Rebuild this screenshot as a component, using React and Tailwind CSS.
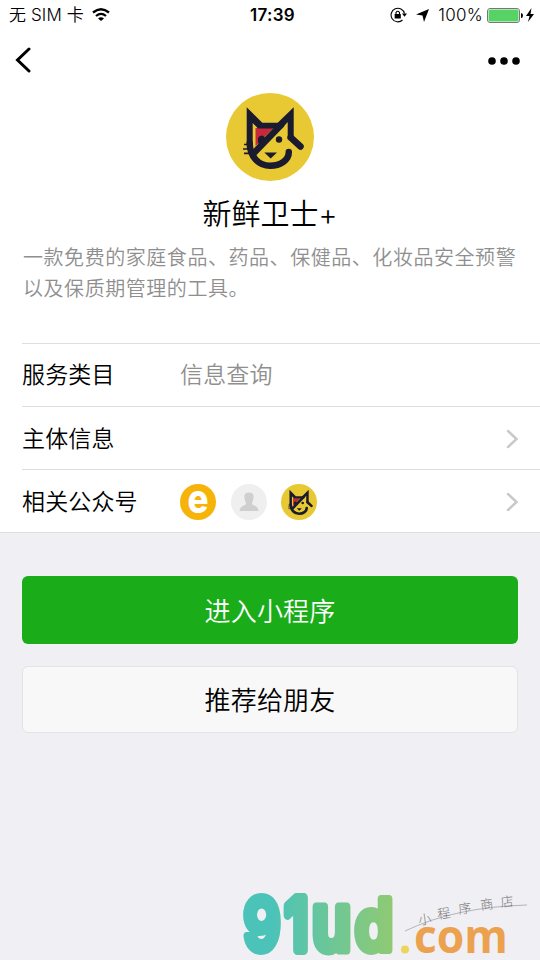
import React from "react";

const CatLogo = ({ className }) => (
  <svg viewBox="0 0 88 88" className={className}>
    <circle cx="44" cy="44" r="44" fill="#e9c933" />
    <path d="M29.500 35H47.500L29.500 53Z" fill="#c9283a" />
    <path d="M32 49V45Q33 42.500 36 42.500Q39 43 39 46L33 52Z" fill="#1a1b2e" />
    <path
      d="M20.700 14.200L36.300 29.800H51.700L67.700 14.200V44.500L61.700 46.500V29L56 35.500H32L26.700 30V52H20.700Z"
      fill="#1a1b2e"
    />
    <path d="M64.700 44.500L74.500 53.500" stroke="#1a1b2e" strokeWidth="6.500" strokeLinecap="round" />
    <path
      d="M23.700 50C23.700 64 33 72.800 44 72.800C54.500 72.800 63 67 62.800 59"
      fill="none"
      stroke="#1a1b2e"
      strokeWidth="6.500"
      strokeLinecap="round"
    />
    <path d="M56 31L26 62" stroke="#1a1b2e" strokeWidth="6.500" />
    <circle cx="53" cy="46.500" r="3.200" fill="#1a1b2e" />
    <path d="M38.300 59.500H51L44.700 65.500Z" fill="#1a1b2e" />
    <path d="M18 51.500H22M17 56H23M18 60.300H24" stroke="#1a1b2e" strokeWidth="1.700" />
  </svg>
);

const Chevron = () => (
  <svg viewBox="0 0 14 20" className="mt-0.5 ml-auto h-5 w-3.5">
    <path d="M3 2L11.500 10L3 18" fill="none" stroke="#c9c9cc" strokeWidth="2.500" strokeLinecap="round" />
  </svg>
);

const StatusBar = () => (
  <div className="grid h-[30px] grid-cols-3 items-center pr-[6px] pl-[9px]">
    <div className="flex items-center text-[17px]">
      <span className="mt-px tracking-[0.1px]">无 SIM 卡</span>
      <svg viewBox="0 0 18 13" className="mb-0.5 ml-2 h-[13px] w-[18px]">
        <path d="M1 4.500Q9 -2 17 4.500M4 8Q9 3.700 14 8" fill="none" stroke="#000" strokeWidth="2.300" />
        <path d="M6 10.500Q9 8 12 10.500L9 13Z" />
      </svg>
    </div>
    <div className="mt-px pl-0.5 text-center text-[17px] font-semibold tracking-[0.3px]">17:39</div>
    <div className="flex items-center justify-end text-[17px]">
      <svg viewBox="0 0 17 16" className="h-4 w-[17px]" fill="none" stroke="#000" strokeWidth="1.100">
        <path d="M14.500 6.500A6.800 6.800 0 1 0 12.500 13" />
        <path d="M12 6.500H17L14.500 9.800Z" fill="#000" stroke="none" />
        <path d="M5.200 7.500H10.200V11H5.200Z" fill="#000" />
        <path d="M6 7V5.500Q7.700 3 9.500 5.500V7" />
      </svg>
      <svg viewBox="0 0 13 13" className="ml-[9px] h-[13px] w-[13px]">
        <path d="M13 0L8 13L6.500 6.500L0 5.500Z" />
      </svg>
      <span className="mt-px ml-[9px] tracking-[0.3px]">100%</span>
      <svg viewBox="0 0 36 15" className="ml-1 h-[15px] w-9">
        <rect x="0.500" y="0.500" width="32" height="14" rx="2.500" fill="#fff" stroke="#777" />
        <rect x="1.500" y="1.500" width="30" height="12" rx="1.500" fill="#56d364" />
        <path d="M34 5Q36 5 36 7.500T34 10Z" />
      </svg>
      <svg viewBox="0 0 8 14" className="ml-[3px] h-3.5 w-2">
        <path d="M5.500 0L0 8H3.500L2 14L8 6H4.500Z" />
      </svg>
    </div>
  </div>
);

const App = () => {
  return (
    <div className="flex h-[960px] w-[540px] flex-col overflow-hidden bg-[#efeff4] font-[Inter,'Noto_Sans_CJK_SC',sans-serif] font-[350] text-black">
      <div className="h-[533px] border-b border-[#dedee0] bg-white">
        <StatusBar />
        <div className="flex h-[62px] items-center justify-between pr-5 pl-[15px]">
          <svg viewBox="0 0 16 26" className="mb-0.5 h-[26px] w-4">
            <path d="M14 2L2.500 13L14 24" fill="none" stroke="#000" strokeWidth="3" strokeLinecap="round" />
          </svg>
          <svg viewBox="0 0 32 8" className="mb-px h-2 w-8">
            <circle cx="4" cy="4" r="3.800" />
            <circle cx="16" cy="4" r="3.800" />
            <circle cx="28" cy="4" r="3.800" />
          </svg>
        </div>
        <CatLogo className="mx-auto mt-[0.5px] h-[88px] w-[88px]" />
        <h1 className="mt-[13.500px] text-center text-[29px] leading-[42px]">新鲜卫士+</h1>
        <p className="mt-[7px] h-[100px] pl-[23px] text-[20px] leading-[31px] tracking-[0.55px] whitespace-nowrap text-[#8f8f8f]">
          一款免费的家庭食品、药品、保健品、化妆品安全预警
          <br />
          以及保质期管理的工具。
        </p>
        <div className="ml-[22px] text-[23px] tracking-[0.15px]">
          <div className="flex h-[63px] items-center border-t border-[#dedee0]">
            <span className="w-[158px]">服务类目</span>
            <span className="text-[#8f8f8f]">信息查询</span>
          </div>
          <div className="flex h-[63px] items-center border-t border-[#dedee0] pr-[21px]">
            <span className="mt-0.5">主体信息</span>
            <Chevron />
          </div>
          <div className="flex h-[63px] items-center border-t border-[#dedee0] pr-[21px]">
            <span className="mt-0.5 w-[158px]">相关公众号</span>
            <div className="mt-px flex gap-[14.500px]">
              <svg viewBox="0 0 36 36" className="h-9 w-9 overflow-visible">
                <circle cx="18" cy="18" r="18" fill="#f6b40b" />
                <text
                  x="7.500"
                  y="29"
                  textLength="21"
                  lengthAdjust="spacingAndGlyphs"
                  fontFamily="Inter"
                  fontSize="40"
                  fontWeight="800"
                  fill="#fff"
                  letterSpacing="0"
                >
                  e
                </text>
              </svg>
              <svg viewBox="0 0 36 36" className="h-9 w-9">
                <circle cx="18" cy="18" r="18" fill="#efefef" />
                <path
                  d="M18 8.500C22 8.500 23 11 22.500 14C22 17 21 18 21 20C23 22 27 22 27.500 27H8.500C9 22 13 22 15 20C15 18 14 17 13.500 14C13 11 14 8.500 18 8.500Z"
                  fill="#cfcfcf"
                />
              </svg>
              <CatLogo className="h-9 w-9" />
            </div>
            <Chevron />
          </div>
        </div>
      </div>

      <div className="flex flex-col gap-[22px] px-[22px] pt-[43px] text-[26px] tracking-[0.2px]">
        <button className="h-[68px] rounded-md bg-[#1aad19] pt-0.5 text-white">进入小程序</button>
        <button className="h-[67px] rounded-md border border-[#e3e3e5] bg-[#f8f8f8] pt-0.5">推荐给朋友</button>
      </div>

      <svg viewBox="0 0 300 75" className="mt-auto ml-auto h-[75px] w-[300px] overflow-visible">
        <defs>
          <linearGradient id="brand" gradientUnits="userSpaceOnUse" x1="0" y1="0" x2="155" y2="0">
            <stop offset="0.200" stopColor="#4bc3b9" />
            <stop offset="1" stopColor="#90ca72" />
          </linearGradient>
        </defs>
        <g
          fill="url(#brand)"
          stroke="url(#brand)"
          strokeWidth="8"
          strokeLinejoin="round"
          fontFamily="Inter"
          fontWeight="600"
        >
          <text x="3.500" y="65" fontSize="71" textLength="37" lengthAdjust="spacingAndGlyphs">9</text>
          <text x="45" y="65" fontSize="71" textLength="23" lengthAdjust="spacingAndGlyphs" strokeWidth="10">1</text>
          <text x="72" y="65" fontSize="78" textLength="39" lengthAdjust="spacingAndGlyphs" strokeWidth="9">u</text>
          <text x="115" y="65" fontSize="70" textLength="38" lengthAdjust="spacingAndGlyphs">d</text>
        </g>
        <circle cx="165" cy="64.500" r="4" fill="#ecd55a" />
        <text
          x="174"
          y="68"
          fontSize="46"
          fontWeight="700"
          fill="#eca14f"
          textLength="94"
          lengthAdjust="spacingAndGlyphs"
          fontFamily="Open Sans"
        >
          com
        </text>
        <path d="M165 46Q215 22 287 20" fill="none" stroke="#b5b5b5" />
        <g fontSize="13" fill="#777" fontFamily="Noto Sans CJK SC" fontWeight="300">
          <text transform="translate(179 40) rotate(-8)">小</text>
          <text transform="translate(198 34) rotate(-8)">程</text>
          <text transform="translate(219 29) rotate(-8)">序</text>
          <text transform="translate(241 25) rotate(-8)">商</text>
          <text transform="translate(261 22) rotate(-6)">店</text>
        </g>
      </svg>
    </div>
  );
};

export default App;
